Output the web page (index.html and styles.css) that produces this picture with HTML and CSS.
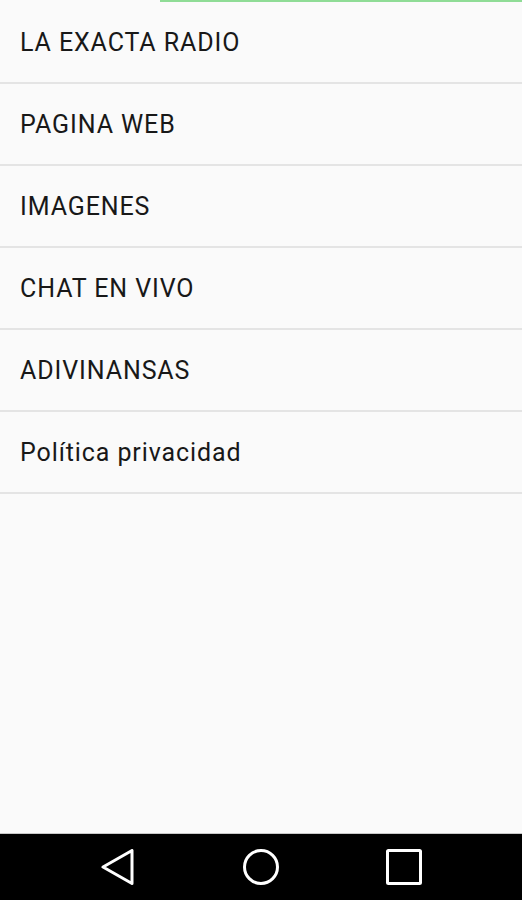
FILE: index.html
```html
<!DOCTYPE HTML>
<html>

<head>
  <meta charset="utf-8">
  <link rel="stylesheet" href="styles.css">
</head>

<body>

  <div class="screen">
    <div class="progress"></div>

    <ul class="menu">
      <li class="menu-item">LA EXACTA RADIO</li>
      <li class="menu-item">PAGINA WEB</li>
      <li class="menu-item">IMAGENES</li>
      <li class="menu-item">CHAT EN VIVO</li>
      <li class="menu-item">ADIVINANSAS</li>
      <li class="menu-item">Política privacidad</li>
    </ul>
  </div>

  <div class="navbar">
    <svg class="nav-icon" width="36" height="36" viewBox="0 0 36 36">
      <polygon points="32,1.5 32,34.5 3,18" fill="none" stroke="#fff" stroke-width="3" stroke-linejoin="round" />
    </svg>
    <svg class="nav-icon" width="36" height="36" viewBox="0 0 36 36">
      <circle cx="18" cy="18" r="16.5" fill="none" stroke="#fff" stroke-width="3" />
    </svg>
    <svg class="nav-icon" width="36" height="36" viewBox="0 0 36 36">
      <rect x="1.5" y="1.5" width="33" height="33" rx="1" fill="none" stroke="#fff" stroke-width="3" />
    </svg>
  </div>

</body>

</html>
```

FILE: styles.css
```css
html,
body {
  margin: 0;
  height: 100%;
}

body {
  display: flex;
  flex-direction: column;
  background: #fafafa;
  font-family: Roboto, "Liberation Sans", sans-serif;
}

.screen {
  flex: 1;
  border-bottom: 1px solid #c8c8c8;
}

.progress {
  height: 2px;
  margin-left: 160px;
  background: #8fdc96;
}

.menu {
  list-style: none;
  margin: 0;
  padding: 0;
}

.menu-item {
  display: flex;
  align-items: center;
  height: 80px;
  padding-left: 20px;
  border-bottom: 2px solid #e4e4e4;
  font-size: 25px;
  letter-spacing: 0.9px;
  color: #181818;
}

.navbar {
  display: flex;
  justify-content: center;
  align-items: center;
  gap: 107px;
  height: 66px;
  background: #000;
}

.nav-icon {
  display: block;
}
```
